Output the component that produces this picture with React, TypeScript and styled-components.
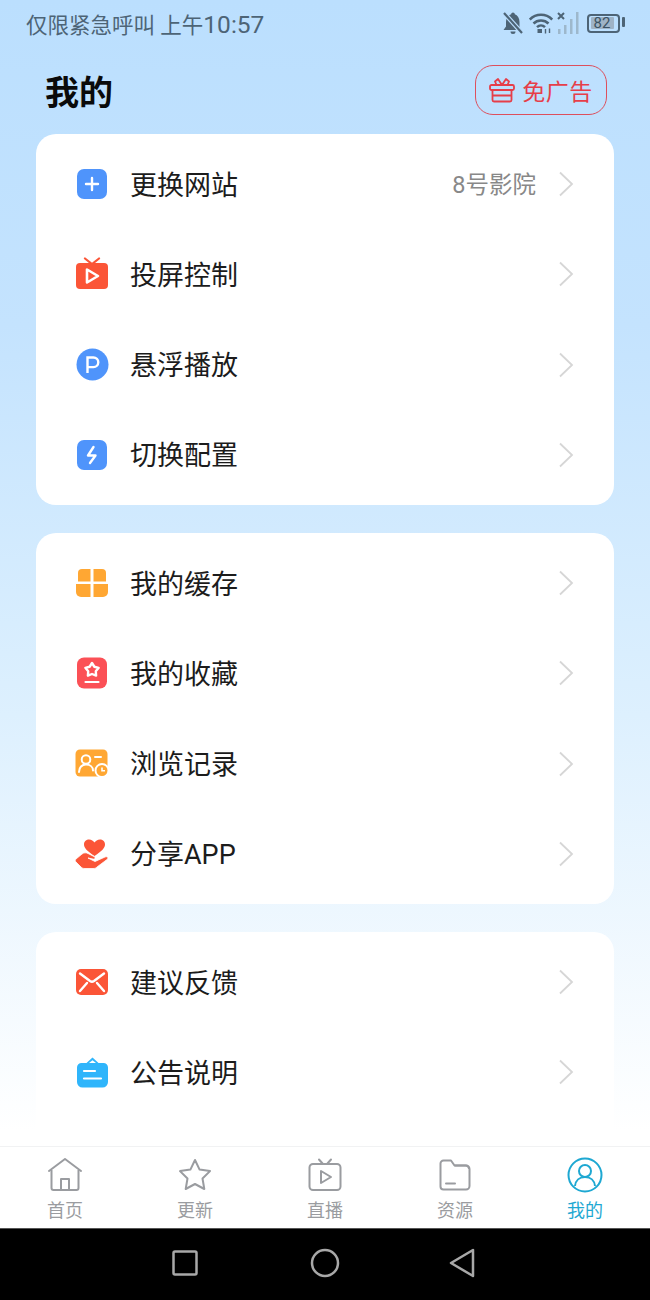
import React from "react";
import styled, { createGlobalStyle } from "styled-components";

const Global = createGlobalStyle`
  html, body {
    margin: 0;
    padding: 0;
    background: #fff;
  }
  body {
    font-family: Roboto, "Noto Sans CJK SC", sans-serif;
  }
`;

const Screen = styled.div`
  width: 650px;
  height: 1300px;
  display: flex;
  flex-direction: column;
  overflow: hidden;
  background: linear-gradient(180deg, #bbdffe 0%, #c4e3fe 25%, #ddf0fe 55%, #ffffff 87%);
`;

const StatusBar = styled.div`
  height: 46px;
  padding: 0 30px 0 26px;
  display: flex;
  align-items: center;
  justify-content: space-between;
  color: #4d6476;
  font-size: 21.5px;
  box-sizing: border-box;
`;

const Clock = styled.span`
  font-size: 24.5px;
`;

const StatusIcons = styled.div`
  display: flex;
  align-items: center;
  gap: 4px;
`;

const Header = styled.div`
  height: 88px;
  padding: 0 43px 0 45px;
  box-sizing: border-box;
  display: flex;
  align-items: center;
  justify-content: space-between;
`;

const Title = styled.h1`
  margin: 0;
  font-size: 34px;
  font-weight: 700;
  color: #0a0a0a;
`;

const AdButton = styled.button`
  width: 132px;
  height: 50px;
  border: 1.5px solid #dd4f5c;
  border-radius: 18px;
  background: transparent;
  display: flex;
  align-items: center;
  justify-content: center;
  gap: 7px;
  padding: 0;
  color: #e63e49;
  font-family: inherit;
  font-size: 23px;
  letter-spacing: 0.5px;
`;

const Content = styled.div`
  flex: 1;
  min-height: 0;
  overflow: hidden;
  padding: 0 36px;
  display: flex;
  flex-direction: column;
  gap: 28px;
`;

const Card = styled.div`
  background: #fff;
  border-radius: 20px;
  padding: 5px 0;
  flex-shrink: 0;
`;

const Row = styled.div`
  height: 90.25px;
  display: flex;
  align-items: center;
  padding: 0 40px 0 38px;
`;

const IconSlot = styled.div`
  width: 36px;
  height: 36px;
  margin-right: 20px;
  display: flex;
  align-items: center;
  justify-content: center;
  flex-shrink: 0;
`;

const Label = styled.span`
  flex: 1;
  font-size: 27px;
  color: #1c1c1c;
  padding-bottom: 2px;
`;

const Value = styled.span`
  font-size: 23.5px;
  color: #888;
  margin-right: 22px;
  padding-bottom: 2px;
`;

const TabBar = styled.nav`
  height: 82px;
  flex-shrink: 0;
  background: #fff;
  border-top: 1.5px solid #f1f2f3;
  box-sizing: border-box;
  display: grid;
  grid-template-columns: repeat(5, 130px);
`;

const Tab = styled.div<{ $active?: boolean }>`
  display: flex;
  flex-direction: column;
  align-items: center;
  padding-top: 10px;
  color: ${(p) => (p.$active ? "#1ea8d2" : "#9a9ca0")};
  font-size: 18px;
  line-height: 24px;
  gap: 6px;
`;

const TabIcon = styled.div`
  height: 36px;
  display: flex;
  align-items: center;
  justify-content: center;
`;

const NavBar = styled.div`
  height: 72px;
  flex-shrink: 0;
  background: #000;
  border-top: 1px solid #555;
  box-sizing: border-box;
  display: flex;
  align-items: center;
  justify-content: center;
  gap: 112px;
  padding: 0 3px 4px 0;
`;

const BackGlyph = styled.svg`
  margin-left: -3px;
`;

const Chevron = () => (
  <svg width="16" height="26" viewBox="0 0 16 26" fill="none">
    <path d="M2 1.500 14 13 2 24.500" stroke="#d6d6d6" strokeWidth="1.800" />
  </svg>
);

const PlusIcon = () => (
  <svg width="32" height="32" viewBox="0 0 32 32">
    <rect x="1" y="1" width="30" height="30" rx="7" fill="#4f94fb" />
    <path d="M16 10v12M10 16h12" stroke="#fff" strokeWidth="2.400" strokeLinecap="round" />
  </svg>
);

const TvIcon = () => (
  <svg width="34" height="34" viewBox="0 0 34 34">
    <path d="M10 1.500 17 7l7-5.500" fill="none" stroke="#fb5537" strokeWidth="2.200" strokeLinecap="round" />
    <rect x="1" y="6" width="32" height="26" rx="4" fill="#fb5537" />
    <path d="M12 12.500v13l11-6.500z" fill="none" stroke="#fff" strokeWidth="2.600" strokeLinejoin="round" />
  </svg>
);

const PIcon = () => (
  <svg width="33" height="33" viewBox="0 0 33 33">
    <circle cx="16.500" cy="16.500" r="16" fill="#4f94fb" />
    <path d="M11.500 25V9.500h6a4.800 4.800 0 0 1 0 9.600h-6" fill="none" stroke="#fff" strokeWidth="2.400" />
  </svg>
);

const BoltIcon = () => (
  <svg width="32" height="32" viewBox="0 0 32 32">
    <rect x="1" y="1" width="30" height="30" rx="7" fill="#4f94fb" />
    <path d="M17.500 8 12 16.500h7.500L14 24" fill="none" stroke="#fff" strokeWidth="2.400" strokeLinecap="round" strokeLinejoin="round" />
  </svg>
);

const GridIcon = () => (
  <svg width="34" height="30" viewBox="0 0 34 30">
    <path d="M3 13.500V5a4 4 0 0 1 4-4h8.500v12.500z" fill="#ffa733" />
    <path d="M18.500 13.500V1H27a4 4 0 0 1 4 4v8.500z" fill="#ffa733" />
    <path d="M1 16h14.500v13H6a5 5 0 0 1-5-5z" fill="#ffa733" />
    <path d="M18.500 16H33v8a5 5 0 0 1-5 5h-9.500z" fill="#ffa733" />
  </svg>
);

const FavIcon = () => (
  <svg width="32" height="32" viewBox="0 0 32 32">
    <rect x="1" y="0.500" width="30" height="31" rx="7" fill="#fb5056" />
    <path
      d="M16 6l2.350 3.760 4.310 1.080-2.860 3.400.31 4.420L16 17l-4.110 1.660.31-4.420-2.860-3.400 4.310-1.080z"
      fill="none"
      stroke="#fff"
      strokeWidth="2.400"
      strokeLinejoin="round"
    />
    <path d="M9.500 25h13" stroke="#fff" strokeWidth="2.200" strokeLinecap="round" />
  </svg>
);

const HistoryIcon = () => (
  <svg width="35" height="30" viewBox="0 0 35 30">
    <rect x="0.500" y="0.500" width="32" height="27" rx="4.500" fill="#ffa733" />
    <circle cx="11" cy="10.500" r="4.300" fill="none" stroke="#fff" strokeWidth="2" />
    <path d="M4 23c0-4.500 3-7.500 7-7.500s7 2.500 7 6M20 8h6" fill="none" stroke="#fff" strokeWidth="2" strokeLinecap="round" />
    <circle cx="27" cy="21.500" r="6.500" fill="#ffa733" stroke="#fff" strokeWidth="2" />
    <path d="M27 18.500v3.200h3" fill="none" stroke="#fff" strokeWidth="1.600" />
  </svg>
);

const ShareIcon = () => (
  <svg width="34" height="30" viewBox="0 0 34 30">
    <path
      d="M19.500 17C12 12 9 9 9 5.500 9 2 11.500 .5 14 .5c2.500 0 4.500 1.500 5.500 3 1-1.500 3-3 5.500-3 2.500 0 5 1.500 5 5 0 3.500-3 6.500-10.500 11.500z"
      fill="#fb5537"
    />
    <path
      d="M1 20l6-5c2-1.500 4-1.500 6-.5l6 3c2 1 1 3-1 2.500l-5-1 7 3.500 10-4.500c2.500-1 4 1 2 2.500l-10 7.500c-1 1-2 1.500-4 1.500h-8c-2 0-3-.5-4-1.500l-5-5c-1-1-1-2 0-3z"
      fill="#fb5537"
      stroke="#fff"
      strokeWidth="0.800"
    />
  </svg>
);

const MailIcon = () => (
  <svg width="34" height="28" viewBox="0 0 34 28">
    <rect x="1" y="1" width="32" height="26" rx="5" fill="#fb5537" />
    <path d="M5 5.500 15 13c1.500 1 2.500 1 4 0L29 5.500M5 23l7-8M29 23l-7-8" fill="none" stroke="#fff" strokeWidth="2.400" strokeLinecap="round" />
  </svg>
);

const NoticeIcon = () => (
  <svg width="33" height="31" viewBox="0 0 33 31">
    <path
      d="M16.500 .5 22.500 6h5a4.500 4.500 0 0 1 4.500 4.500V25a5.500 5.500 0 0 1-5.500 5.500h-20A5.500 5.500 0 0 1 1 25V10.500A4.500 4.500 0 0 1 5.500 6h5z"
      fill="#2fb5fb"
    />
    <path d="M13 6 16.500 3.200 20 6z" fill="#fff" />
    <path d="M8 14h11M8 21.500h17" stroke="#fff" strokeWidth="2.200" strokeLinecap="round" />
  </svg>
);

const GiftIcon = () => (
  <svg width="26" height="26" viewBox="0 0 26 26" fill="none" stroke="#e63e49" strokeWidth="1.800">
    <rect x="1" y="8" width="24" height="5" rx="1.500" />
    <path d="M3.500 13v10a1.500 1.500 0 0 0 1.500 1.500h16a1.500 1.500 0 0 0 1.500-1.500V13M3.500 18.500h19" />
    <path d="M13 8 9 2 6 4.500 7.500 8M13 8l4-6 3 2.500L18.500 8" strokeLinejoin="round" />
  </svg>
);

const BellOff = () => (
  <svg width="24" height="24" viewBox="0 0 24 24">
    <path d="M12 1.500c-1 0-1.800.8-1.800 1.800C7 4.200 5 7 5 11v4.500L2.500 19h18L18.500 16v-5c0-4-2-6.800-4.700-7.700 0-1-.8-1.800-1.800-1.800zM9.500 20.500a2.500 2.500 0 0 0 5 0z" fill="#4d6476" />
    <path d="M3 2l18 20" stroke="#badefe" strokeWidth="4.500" />
    <path d="M3 2l18 20" stroke="#4d6476" strokeWidth="2.200" />
  </svg>
);

const WifiIcon = () => (
  <svg width="24" height="22" viewBox="0 0 24 22" fill="none" stroke="#4d6476" strokeWidth="2.500">
    <path d="M.8 7.500C7 1.300 17 1.300 23.200 7.500M4.500 11.500c4-4 11-4 15 0M8 15.200c2.300-2.200 5.700-2.200 8 0" />
    <rect x="8.500" y="17" width="4.500" height="4" fill="#4d6476" stroke="none" />
    <path d="M16.500 17v4.500M20.500 16.500v4.500" strokeWidth="1.400" />
  </svg>
);

const SignalIcon = () => (
  <svg width="24" height="24" viewBox="0 0 24 24">
    <path d="M1 2l6 6M7 2 1 8" stroke="#4d6476" strokeWidth="2" />
    <rect x="1" y="18" width="2.500" height="5" fill="#9db8cc" />
    <rect x="7" y="14" width="2.500" height="9" fill="#9db8cc" />
    <rect x="13" y="8" width="2.500" height="15" fill="#9db8cc" />
    <rect x="19" y="1" width="2.500" height="22" fill="#9db8cc" />
  </svg>
);

const BatteryBody = styled.div`
  width: 26px;
  height: 12px;
  border: 2px solid #4d6476;
  border-radius: 4px;
  padding: 1.500px;
  position: relative;
  margin-left: 2px;
  &::after {
    content: "";
    position: absolute;
    right: -7px;
    top: 1px;
    width: 3px;
    height: 10px;
    border-radius: 1px;
    background: #4d6476;
  }
`;

const BatteryFill = styled.div`
  width: 90%;
  height: 100%;
  background: #9fb3c6;
  border-radius: 1px;
  font-size: 15px;
  line-height: 12px;
  color: #3c5364;
  padding-left: 3px;
  box-sizing: border-box;
  white-space: nowrap;
`;

const HomeTab = () => (
  <svg width="34" height="34" viewBox="0 0 34 34" fill="none" stroke="#9a9ca0" strokeWidth="2" strokeLinejoin="round">
    <path d="M1 13 17 1l16 12" strokeLinecap="round" />
    <path d="M3.500 12v18a2 2 0 0 0 2 2h23a2 2 0 0 0 2-2V12" />
    <path d="M13 32V21h8v11" />
  </svg>
);

const StarTab = () => (
  <svg width="34" height="34" viewBox="0 0 34 34" fill="none" stroke="#9a9ca0" strokeWidth="2" strokeLinejoin="round">
    <path d="M17 2l4.600 9.600 10.400 1.500-7.500 7.400 1.800 10.500L17 26l-9.300 5 1.800-10.500L2 13.100l10.400-1.500z" />
  </svg>
);

const LiveTab = () => (
  <svg width="34" height="34" viewBox="0 0 34 34" fill="none" stroke="#9a9ca0" strokeWidth="2" strokeLinejoin="round">
    <path d="M11 1.500 15 6M23 1.500 19 6" strokeLinecap="round" />
    <rect x="1.500" y="6" width="31" height="26" rx="3.500" />
    <path d="M13 13v12l10-6z" />
  </svg>
);

const FolderTab = () => (
  <svg width="32" height="32" viewBox="0 0 32 32" fill="none" stroke="#9a9ca0" strokeWidth="2" strokeLinejoin="round">
    <path d="M1.500 4.500a3 3 0 0 1 3-3h7.500l3.500 5h11.500a3.500 3.500 0 0 1 3.500 3.500v17a3.500 3.500 0 0 1-3.500 3.500H4.500a3 3 0 0 1-3-3z" />
    <path d="M15.500 6.500h11a3.500 3.500 0 0 1 3.500 3.500" />
    <path d="M7 24.500h9" strokeLinecap="round" />
  </svg>
);

const MineTab = () => (
  <svg width="36" height="36" viewBox="0 0 36 36" fill="none" stroke="#1ea8d2" strokeWidth="2">
    <circle cx="18" cy="18" r="16.500" />
    <circle cx="18" cy="14" r="6" />
    <path d="M8 29c.5-5.500 4.500-9 10-9s9.500 3.500 10 9" />
  </svg>
);

const groups = [
  [
    { icon: <PlusIcon />, label: "更换网站", value: "8号影院" },
    { icon: <TvIcon />, label: "投屏控制" },
    { icon: <PIcon />, label: "悬浮播放" },
    { icon: <BoltIcon />, label: "切换配置" },
  ],
  [
    { icon: <GridIcon />, label: "我的缓存" },
    { icon: <FavIcon />, label: "我的收藏" },
    { icon: <HistoryIcon />, label: "浏览记录" },
    { icon: <ShareIcon />, label: "分享APP" },
  ],
  [
    { icon: <MailIcon />, label: "建议反馈" },
    { icon: <NoticeIcon />, label: "公告说明" },
    { icon: null, label: "" },
  ],
];

const tabs = [
  { icon: <HomeTab />, label: "首页" },
  { icon: <StarTab />, label: "更新" },
  { icon: <LiveTab />, label: "直播" },
  { icon: <FolderTab />, label: "资源" },
  { icon: <MineTab />, label: "我的", active: true },
];

export default function App() {
  return (
    <>
      <Global />
      <Screen>
        <StatusBar>
          <span>
            仅限紧急呼叫 上午<Clock>10:57</Clock>
          </span>
          <StatusIcons>
            <BellOff />
            <WifiIcon />
            <SignalIcon />
            <BatteryBody>
              <BatteryFill>82</BatteryFill>
            </BatteryBody>
          </StatusIcons>
        </StatusBar>
        <Header>
          <Title>我的</Title>
          <AdButton>
            <GiftIcon />
            免广告
          </AdButton>
        </Header>
        <Content>
          {groups.map((rows, i) => (
            <Card key={i}>
              {rows.map((row, j) => (
                <Row key={j}>
                  <IconSlot>{row.icon}</IconSlot>
                  <Label>{row.label}</Label>
                  {row.value && <Value>{row.value}</Value>}
                  {row.label && <Chevron />}
                </Row>
              ))}
            </Card>
          ))}
        </Content>
        <TabBar>
          {tabs.map((tab) => (
            <Tab key={tab.label} $active={tab.active}>
              <TabIcon>{tab.icon}</TabIcon>
              {tab.label}
            </Tab>
          ))}
        </TabBar>
        <NavBar>
          <svg width="26" height="26" viewBox="0 0 26 26" fill="none" stroke="#a8a8a8" strokeWidth="2.500">
            <rect x="1.500" y="1.500" width="23" height="23" rx="1.500" />
          </svg>
          <svg width="30" height="30" viewBox="0 0 30 30" fill="none" stroke="#a8a8a8" strokeWidth="2.500">
            <circle cx="15" cy="15" r="13" />
          </svg>
          <BackGlyph width="26" height="30" viewBox="0 0 26 30" fill="none" stroke="#a8a8a8" strokeWidth="2.500" strokeLinejoin="round">
            <path d="M24 2v26L2 15z" />
          </BackGlyph>
        </NavBar>
      </Screen>
    </>
  );
}
